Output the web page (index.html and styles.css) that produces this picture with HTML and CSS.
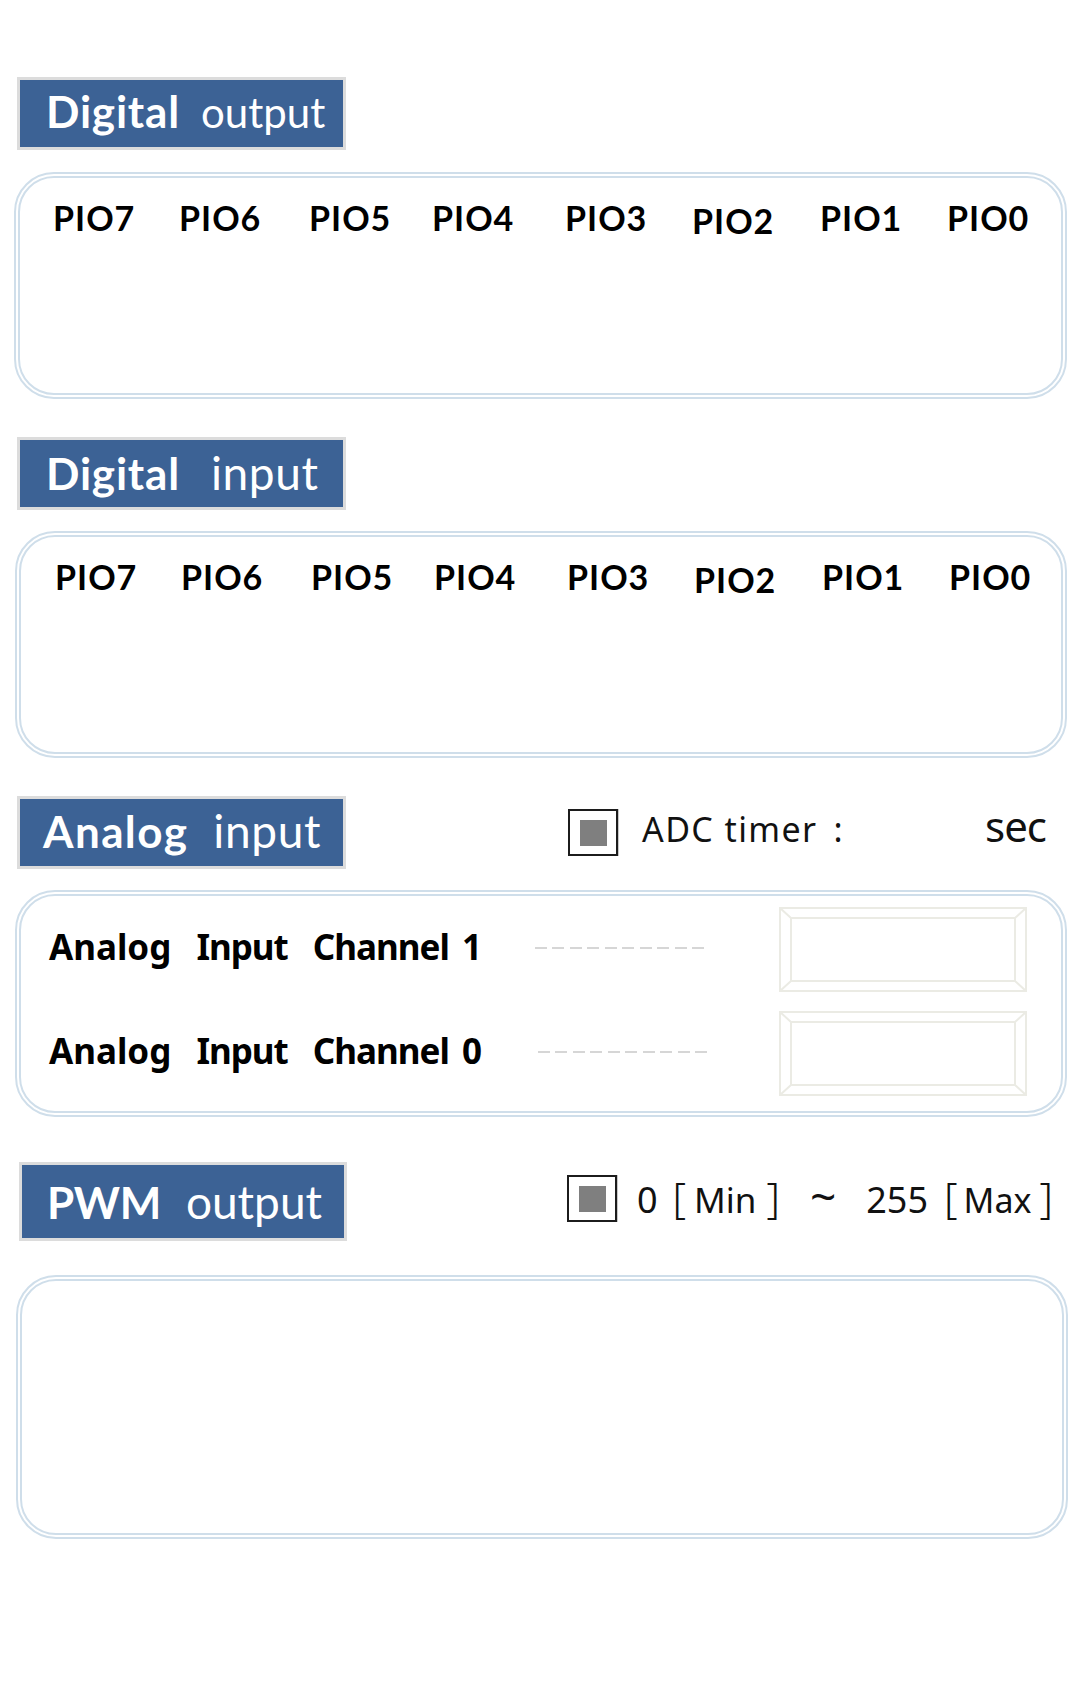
FILE: index.html
```html
<!DOCTYPE html>
<html lang="en">
<head>
<meta charset="utf-8">
<title>IO Panel</title>
<link rel="stylesheet" href="styles.css">
</head>
<body>
<main class="page">

  <section class="sec sec-do">
    <div class="sec-head">
      <h2 class="tag"><b>Digital</b><span class="tag-sub">output</span></h2>
    </div>
    <div class="panel pio-panel">
      <span>PIO7</span><span>PIO6</span><span>PIO5</span><span>PIO4</span>
      <span>PIO3</span><span class="pio-low">PIO2</span><span>PIO1</span><span>PIO0</span>
    </div>
  </section>

  <section class="sec sec-di">
    <div class="sec-head">
      <h2 class="tag tag-di"><b>Digital</b><span class="tag-sub tag-sub-lg">input</span></h2>
    </div>
    <div class="panel pio-panel panel-b">
      <span>PIO7</span><span>PIO6</span><span>PIO5</span><span>PIO4</span>
      <span>PIO3</span><span class="pio-low">PIO2</span><span>PIO1</span><span>PIO0</span>
    </div>
  </section>

  <section class="sec sec-ai">
    <div class="sec-head">
      <h2 class="tag tag-analog"><b>Analog</b><span class="tag-sub tag-sub-lg">input</span></h2>
      <div class="ctrl ctrl-adc">
        <span class="chk"><span class="chk-fill"></span></span>
        <div class="readout">
          <span class="adc-label">ADC timer<span class="colon">:</span></span>
          <span class="sec-unit">sec</span>
        </div>
      </div>
    </div>
    <div class="panel panel-b analog-panel">
      <div class="arow">
        <span class="alabel"><span class="w">Analog</span><span class="w tight">Input</span><span class="last tight">Channel 1</span></span>
        <span class="dash"></span>
        <svg class="abox" width="248" height="85" viewBox="0 0 248 85">
          <rect x="1" y="1" width="246" height="83" fill="none" stroke="#ebebe4" stroke-width="2"/>
          <rect x="12" y="11" width="224" height="63" fill="none" stroke="#ebebe4" stroke-width="2"/>
          <path d="M1 1 L12 11 M247 1 L236 11 M1 84 L12 74 M247 84 L236 74" stroke="#ebebe4" stroke-width="2"/>
        </svg>
      </div>
      <div class="arow">
        <span class="alabel"><span class="w">Analog</span><span class="w tight">Input</span><span class="last tight">Channel 0</span></span>
        <span class="dash dash-2"></span>
        <svg class="abox" width="248" height="85" viewBox="0 0 248 85">
          <rect x="1" y="1" width="246" height="83" fill="none" stroke="#ebebe4" stroke-width="2"/>
          <rect x="12" y="11" width="224" height="63" fill="none" stroke="#ebebe4" stroke-width="2"/>
          <path d="M1 1 L12 11 M247 1 L236 11 M1 84 L12 74 M247 84 L236 74" stroke="#ebebe4" stroke-width="2"/>
        </svg>
      </div>
    </div>
  </section>

  <section class="sec sec-pwm">
    <div class="sec-head">
      <h2 class="tag tag-pwm"><b>PWM</b><span class="tag-sub tag-sub-lg">output</span></h2>
      <div class="ctrl ctrl-pwm">
        <span class="chk"><span class="chk-fill"></span></span>
        <div class="range">
          <span class="num">0</span><span class="br br-1">[</span><span class="unit">Min</span><span class="br br-2">]</span><span class="tilde">~</span><span class="num num-2">255</span><span class="br br-3">[</span><span class="unit unit-2">Max</span><span class="br br-4">]</span>
        </div>
      </div>
    </div>
    <div class="panel panel-pwm"></div>
  </section>

</main>
</body>
</html>
```

FILE: styles.css
```css
html, body {
  margin: 0;
  padding: 0;
  background: #ffffff;
}

.page {
  width: 1080px;
  padding-top: 77px;
  box-sizing: border-box;
}

.sec + .sec {
  margin-top: 38px;
}

.sec-pwm {
  margin-top: 45px !important;
}

/* ---------- section header ---------- */
.sec-head {
  display: flex;
  align-items: center;
  padding-left: 17px;
  padding-right: 34px;
}

.tag {
  margin: 0;
  box-sizing: border-box;
  flex: 0 0 auto;
  width: 329px;
  height: 73px;
  border: 3px solid #dcdcdc;
  background: #3c6295;
  color: #ffffff;
  font-family: Lato, "Noto Sans", sans-serif;
  font-size: 42px;
  font-weight: 400;
  display: flex;
  align-items: baseline;
  padding: 5px 0 0 26px;
  white-space: nowrap;
}

.tag b {
  font-size: 44px;
  font-weight: 700;
  letter-spacing: 0.8px;
}

.tag-sub {
  margin-left: 21px;
}

.tag-sub-lg {
  font-size: 46px;
  letter-spacing: 0.6px;
}

.tag-di .tag-sub {
  margin-left: 31px;
}

.tag-analog {
  padding-left: 23px;
  padding-top: 4px;
}

.tag-analog b {
  letter-spacing: 1.4px;
}

.tag-analog .tag-sub {
  margin-left: 25px;
}

.tag-pwm {
  height: 79px;
  width: 328px;
  margin-left: 2px;
  padding-left: 25px;
  padding-top: 9px;
}

.tag-pwm b {
  letter-spacing: -0.4px;
}

.tag-pwm .tag-sub {
  margin-left: 25px;
  letter-spacing: 0;
}

/* ---------- controls in header ---------- */
.ctrl {
  flex: 1;
  display: flex;
  align-items: center;
}

.ctrl-adc {
  margin-left: 222px;
}

.ctrl-pwm {
  margin-left: 220px;
}

.chk {
  flex: 0 0 auto;
  width: 50px;
  height: 47px;
  box-sizing: border-box;
  border: 2px solid #1c1c1c;
  box-shadow: 1px 0 0 #c8c8c8;
  display: flex;
  align-items: center;
  justify-content: center;
  background: #ffffff;
}

.ctrl-pwm .chk {
  margin-top: -6px;
}

.chk-fill {
  width: 27px;
  height: 26px;
  background: #7f7f7f;
}

.readout {
  flex: 1;
  display: flex;
  align-items: baseline;
  margin-left: 24px;
  padding-bottom: 15px;
  font-family: "Noto Sans", "Open Sans", sans-serif;
  color: #111111;
}

.adc-label {
  font-size: 34px;
  letter-spacing: 1.4px;
}

.colon {
  margin-left: 16px;
}

.sec-unit {
  margin-left: auto;
  font-size: 42px;
  letter-spacing: -1px;
}

.range {
  display: flex;
  align-items: baseline;
  margin-left: 20px;
  padding-bottom: 14px;
  font-family: "Noto Sans", "Open Sans", sans-serif;
  font-size: 36px;
  color: #111111;
  white-space: nowrap;
}

.br {
  font-weight: 300;
  font-size: 42px;
}

.br-1 { margin-left: 15px; }
.br-2 { margin-left: 10px; }
.br-3 { margin-left: 16px; }
.br-4 { margin-left: 8px; }

.unit {
  font-size: 35px;
  margin-left: 8px;
}

.unit-2 {
  font-size: 34px;
  margin-left: 6px;
}

.tilde {
  font-size: 46px;
  margin-left: 30px;
}

.num-2 {
  margin-left: 30px;
}

/* ---------- panels ---------- */
.panel {
  box-sizing: border-box;
  border: 6px double #cfdeea;
  border-radius: 40px;
  margin-left: 14px;
  width: 1053px;
  height: 227px;
  margin-top: 22px;
  background: #ffffff;
}

.panel-b {
  margin-left: 15px;
  width: 1052px;
  margin-top: 21px;
}

.pio-panel {
  display: grid;
  grid-template-columns: 126px 130px 123px 133px 127px 128px 127px auto;
  align-items: start;
  align-content: start;
  padding: 20px 0 0 33px;
  font-family: Lato, "Noto Sans", sans-serif;
  font-weight: 700;
  font-size: 34px;
  letter-spacing: 1px;
  line-height: 40px;
  color: #000000;
}

.panel-b.pio-panel {
  padding-left: 34px;
}

.pio-low {
  padding-top: 3px;
}

/* ---------- analog rows ---------- */
.analog-panel {
  display: flex;
  flex-direction: column;
  gap: 19px;
  padding: 11px 34px 15px 28px;
}

.arow {
  display: flex;
  align-items: center;
  height: 85px;
}

.alabel {
  flex: 0 0 486px;
  font-family: "Noto Sans", "Open Sans", sans-serif;
  font-weight: 700;
  font-size: 35px;
  color: #000000;
  padding-bottom: 6px;
  white-space: nowrap;
}

.alabel .w {
  margin-right: 25px;
}

.alabel .tight {
  letter-spacing: -1px;
}

.alabel .last {
  word-spacing: 5px;
}

.dash {
  flex: 0 0 175px;
  height: 2px;
  margin-top: -3px;
  background: repeating-linear-gradient(to right, #d6d6d6 0 12px, transparent 12px 17.5px);
}

.dash-2 {
  margin-left: 3px;
}

.abox {
  display: block;
  margin-left: auto;
  flex: 0 0 auto;
}

/* ---------- pwm ---------- */
.panel-pwm {
  margin-left: 16px;
  width: 1052px;
  height: 264px;
  margin-top: 34px;
}
```
